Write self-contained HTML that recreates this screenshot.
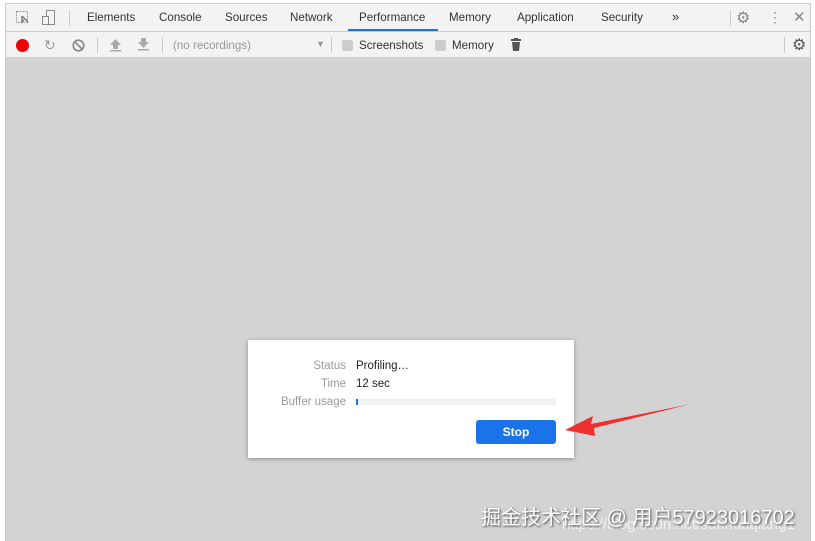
<!DOCTYPE html>
<html><head><meta charset="utf-8"><style>
*{margin:0;padding:0;box-sizing:border-box}
body{width:815px;height:541px;background:#fff;font-family:"Liberation Sans",sans-serif;position:relative;overflow:hidden}
#wrap{position:absolute;left:5px;top:3px;right:4px;bottom:0;border:1px solid #ccc;border-bottom:none;background:#d3d3d3}
.bar{position:absolute;left:0;right:0;background:#f3f3f3;border-bottom:1px solid #ccc}
#r1{top:0;height:28px}
#r2{top:28px;height:26px}
.t{position:absolute;top:7px;font-size:11.6px;color:#333}
.sep{position:absolute;width:1px;background:#ccc}
.g{position:absolute;font-size:11.6px;color:#999}
#dlg{position:absolute;left:242px;top:336px;width:326px;height:118px;background:#fff;box-shadow:0 1px 4px rgba(0,0,0,.35)}
.l{position:absolute;right:228px;font-size:11.5px;color:#999;text-align:right}
.v{position:absolute;left:108px;font-size:11.5px;color:#222}
#btn{position:absolute;left:228px;top:80px;width:80px;height:24px;background:#1a73e8;border-radius:3px;color:#fff;font-weight:bold;font-size:12px;text-align:center;line-height:24px}
.wm{position:absolute;font-family:"Liberation Sans","Noto Sans CJK SC",sans-serif}
</style></head><body>
<div id="wrap">
<div class="bar" id="r1">
<svg style="position:absolute;left:10px;top:7px" width="14" height="14"><rect x="0.5" y="0.5" width="11" height="11" fill="none" stroke="#999" stroke-dasharray="2 1"/><path d="M6 5l6 6M6 5v6l2-2" stroke="#777" fill="none" stroke-width="1.4"/></svg>
<svg style="position:absolute;left:36px;top:6px" width="14" height="16"><rect x="4.5" y="0.5" width="8" height="14" fill="none" stroke="#888"/><rect x="0.5" y="6.5" width="6" height="8" fill="#f3f3f3" stroke="#888"/></svg>
<div class="sep" style="left:63px;top:6px;height:16px"></div>
<span class="t" style="left:81px">Elements</span>
<span class="t" style="left:153px">Console</span>
<span class="t" style="left:219px">Sources</span>
<span class="t" style="left:284px">Network</span>
<span class="t" style="left:353px">Performance</span>
<div style="position:absolute;left:342px;top:25px;width:90px;height:2px;background:#1a73e8"></div>
<span class="t" style="left:443px">Memory</span>
<span class="t" style="left:511px">Application</span>
<span class="t" style="left:595px">Security</span>
<span class="t" style="left:666px;font-size:13px;top:5px">»</span>
<div class="sep" style="left:724px;top:6px;height:16px"></div>
<span class="t" style="left:730px;top:4px;font-size:16px;color:#888">⚙</span>
<span class="t" style="left:762px;top:5px;font-size:14px;color:#888">⋮</span>
<span class="t" style="left:787px;top:4px;font-size:15px;color:#888">✕</span>
</div>
<div class="bar" id="r2">
<div style="position:absolute;left:10px;top:7px;width:13px;height:13px;border-radius:50%;background:#e00"></div>
<span class="g" style="left:38px;top:5px;font-size:14px">↻</span>
<svg style="position:absolute;left:66px;top:7px" width="13" height="13"><circle cx="6.5" cy="6.5" r="5.3" fill="none" stroke="#888" stroke-width="1.6"/><path d="M3 3l7 7" stroke="#888" stroke-width="1.6"/></svg>
<div class="sep" style="left:91px;top:5px;height:16px"></div>
<svg style="position:absolute;left:104px;top:7px" width="11" height="13"><path d="M5.5 0L0 6h3v4h5V6h3z" fill="#aaa"/><rect y="11" width="11" height="1.5" fill="#aaa"/></svg>
<svg style="position:absolute;left:132px;top:6px" width="11" height="13"><path d="M5.5 10L0 4h3V0h5v4h3z" fill="#aaa"/><rect y="11" width="11" height="1.5" fill="#aaa"/></svg>
<div class="sep" style="left:156px;top:5px;height:16px"></div>
<span class="g" style="left:167px;top:7px">(no recordings)</span>
<span class="g" style="left:310px;top:7px;font-size:9px">▼</span>
<div class="sep" style="left:325px;top:5px;height:16px"></div>
<div style="position:absolute;left:336px;top:8px;width:11px;height:11px;background:#ccc;border-radius:2px"></div>
<span class="t" style="left:353px;top:7px">Screenshots</span>
<div style="position:absolute;left:429px;top:8px;width:11px;height:11px;background:#ccc;border-radius:2px"></div>
<span class="t" style="left:446px;top:7px">Memory</span>
<svg style="position:absolute;left:505px;top:6px" width="10" height="13"><rect x="0" y="1" width="10" height="2" fill="#555"/><rect x="3" y="0" width="4" height="2" fill="#555"/><path d="M1 4h8l-1 9H2z" fill="#555"/></svg>
<div class="sep" style="left:778px;top:5px;height:16px"></div>
<span class="t" style="left:786px;top:3px;font-size:16px;color:#555">⚙</span>
</div>
<div id="dlg">
<span class="l" style="top:20px">Status</span><span class="v" style="top:20px">Profiling…</span>
<span class="l" style="top:38px">Time</span><span class="v" style="top:38px">12 sec</span>
<span class="l" style="top:56px">Buffer usage</span>
<div style="position:absolute;left:108px;top:59px;width:200px;height:6px;background:#f1f1f1"></div>
<div style="position:absolute;left:108px;top:59px;width:2px;height:6px;background:#1a73e8"></div>
<div id="btn">Stop</div>
</div>
<svg style="position:absolute;left:555px;top:398px" width="135" height="40"><path d="M130 2L30 22l2-8L4 28l30 6-1-8z" fill="#f03030"/></svg>
<span class="wm" style="left:556px;top:512px;font-size:15px;color:rgba(255,255,255,.7)">https://blog.csdn.net/sunhuaqiang1</span>
<span class="wm" style="left:475px;top:497px;font-size:20px;color:#fff;text-shadow:1px 1px 2px #444">掘金技术社区 @ 用户57923016702</span>
</div>
</body></html>
